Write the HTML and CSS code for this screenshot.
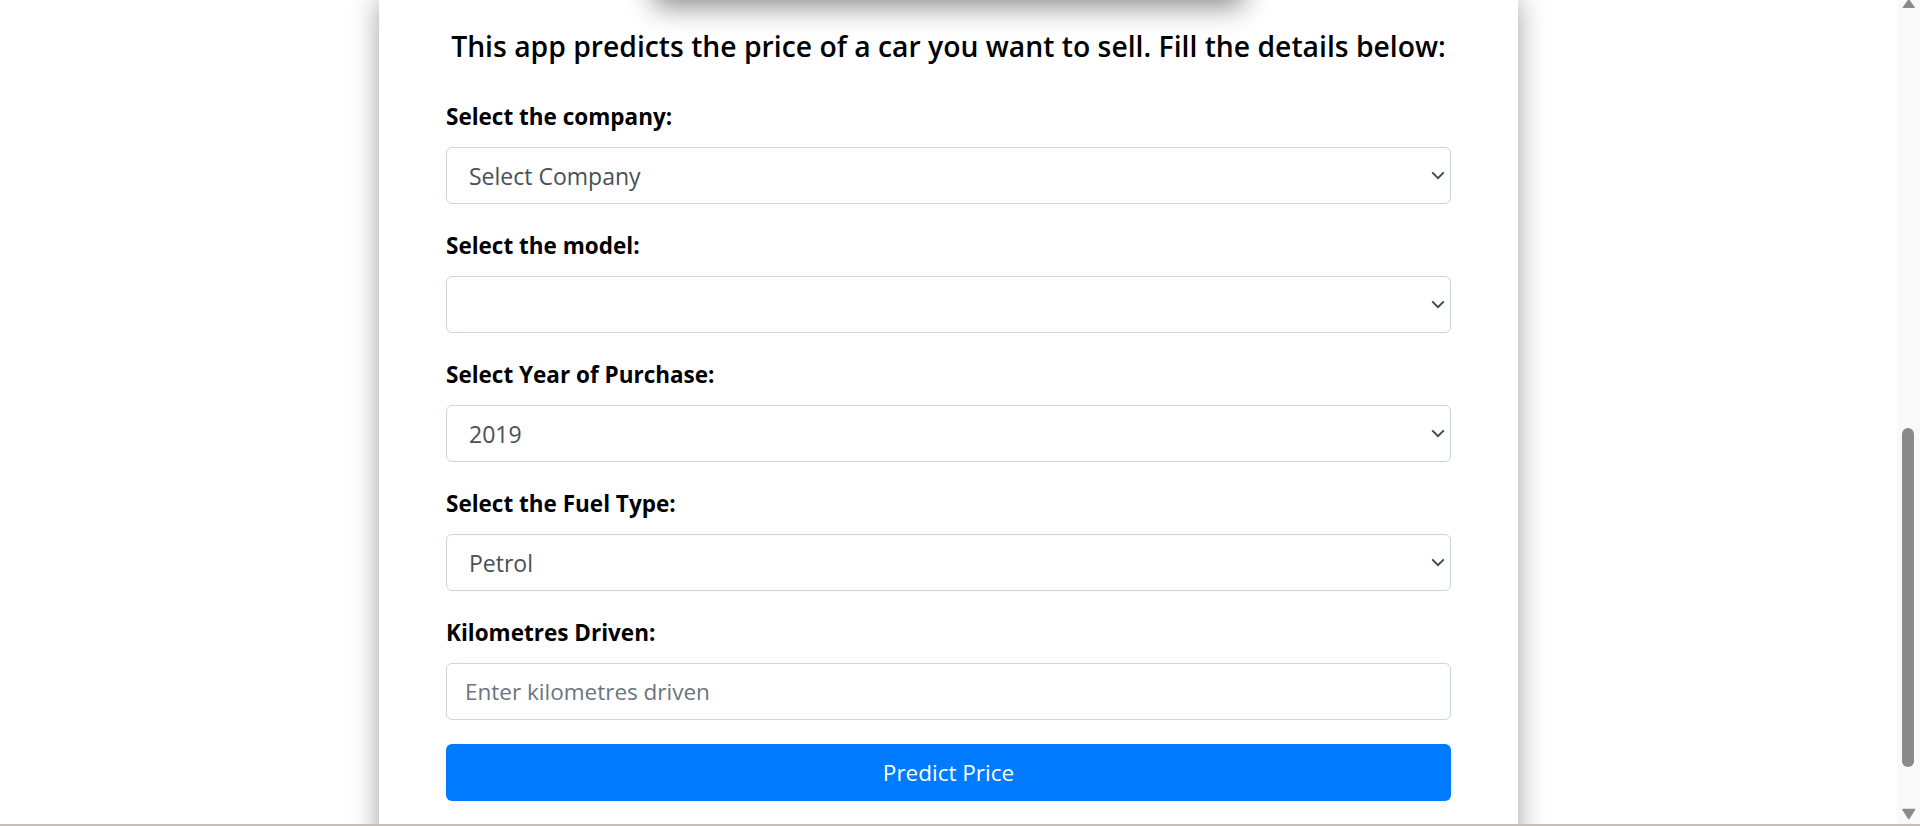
FILE: index.html
```html
<!DOCTYPE html>
<html lang="en">
<head>
<meta charset="utf-8">
<title>Car Price Predictor</title>
<link rel="stylesheet" href="styles.css">
</head>
<body>
<div class="screen">
  <div class="viewport">
    <main class="card">
      <div class="banner"></div>
      <h1 class="title">This app predicts the price of a car you want to sell. Fill the details below:</h1>
      <form class="form">
        <div class="group">
          <label class="label" for="company">Select the company:</label>
          <select class="control select" id="company"><option>Select Company</option></select>
        </div>
        <div class="group">
          <label class="label" for="model">Select the model:</label>
          <select class="control select" id="model"><option></option></select>
        </div>
        <div class="group">
          <label class="label" for="year">Select Year of Purchase:</label>
          <select class="control select" id="year"><option>2019</option></select>
        </div>
        <div class="group">
          <label class="label" for="fuel">Select the Fuel Type:</label>
          <select class="control select" id="fuel"><option>Petrol</option></select>
        </div>
        <div class="group">
          <label class="label" for="kms">Kilometres Driven:</label>
          <input class="control input" id="kms" type="text" placeholder="Enter kilometres driven">
        </div>
        <button class="btn" type="button">Predict Price</button>
      </form>
    </main>
    <div class="scrollbar">
      <svg class="arrow-up" width="23" height="8" viewBox="0 0 23 8"><path d="M6 7.5 H17.5 L11.75 -0.5 Z" fill="#8a8a8a" stroke="#8a8a8a" stroke-width="1" stroke-linejoin="round"/></svg>
      <div class="thumb"></div>
      <svg class="arrow-down" width="23" height="12" viewBox="0 0 23 12"><path d="M6 1.5 H17.5 L11.75 10.5 Z" fill="#8a8a8a" stroke="#8a8a8a" stroke-width="1.5" stroke-linejoin="round"/></svg>
    </div>
  </div>
  <div class="bottom-line"></div>
</div>
</body>
</html>
```
FILE: styles.css
```css
* { box-sizing: border-box; }

html, body {
  margin: 0;
  padding: 0;
  background: #ffffff;
}

body {
  font-family: "Open Sans", "Noto Sans", "Liberation Sans", sans-serif;
  color: #000;
}

.screen {
  width: 1920px;
  height: 826px;
  display: flex;
  flex-direction: column;
  overflow: hidden;
}

.viewport {
  height: 824px;
  display: flex;
  flex-direction: row;
  overflow: hidden;
}

.card {
  width: 1139px;
  margin: 0 auto;
  background: #fff;
  box-shadow: 0 0 26px rgba(0, 0, 0, 0.38);
  padding: 28px 67px 60px;
  display: flex;
  flex-direction: column;
  align-self: flex-start;
  min-height: 900px;
}

.banner {
  width: 585px;
  height: 40px;
  margin: -68px auto 28px;
  background: #fff;
  box-shadow: 0 4px 28px 2px rgba(0, 0, 0, 0.48);
  position: relative;
  z-index: 0;
}

.title {
  margin: 0 0 35px;
  font-size: 28.3px;
  font-weight: 600;
  line-height: 36px;
  text-align: center;
  color: #000;
  position: relative;
  z-index: 1;
}

.form {
  display: flex;
  flex-direction: column;
  position: relative;
  z-index: 1;
}

.group {
  display: flex;
  flex-direction: column;
  margin-bottom: 24px;
}

.label {
  font-size: 22.5px;
  font-weight: 700;
  line-height: 36px;
  margin-bottom: 12px;
  color: #000;
}

.control {
  width: 100%;
  height: 57px;
  border: 1.5px solid #ced4da;
  border-radius: 6px;
  background-color: #fff;
  font-family: "Open Sans", "Noto Sans", "Liberation Sans", sans-serif;
  font-size: 23px;
  color: #495057;
  outline: none;
}

.select {
  appearance: none;
  -webkit-appearance: none;
  padding: 0 30px 0 22px;
  background-image: url("data:image/svg+xml,%3Csvg xmlns='http://www.w3.org/2000/svg' width='14' height='9' viewBox='0 0 14 9'%3E%3Cpath d='M1.2 1.4 L7 7.2 L12.8 1.4' fill='none' stroke='%23474747' stroke-width='2'/%3E%3C/svg%3E");
  background-repeat: no-repeat;
  background-position: right 5.5px top 23px;
  background-size: 14px 9px;
}

.input {
  padding: 0 18px;
  font-size: 22.5px;
}

.input::placeholder {
  color: #6c757d;
  opacity: 1;
}

.btn {
  width: 100%;
  height: 57px;
  border: none;
  border-radius: 6px;
  background: #007bff;
  color: #fff;
  font-family: "Open Sans", "Noto Sans", "Liberation Sans", sans-serif;
  font-size: 22.5px;
  cursor: pointer;
}

.scrollbar {
  width: 23px;
  flex: 0 0 23px;
  background: #f9f9f9;
  display: flex;
  flex-direction: column;
  align-items: center;
}

.arrow-up {
  display: block;
  flex: 0 0 8px;
}

.thumb {
  width: 12px;
  height: 339px;
  margin-top: 420px;
  margin-left: -1px;
  background: #8a8a8a;
  border-radius: 6px;
  flex: 0 0 339px;
}

.arrow-down {
  display: block;
  margin-top: 41px;
  flex: 0 0 12px;
}

.bottom-line {
  height: 2px;
  background: #c4c0b8;
}
```
